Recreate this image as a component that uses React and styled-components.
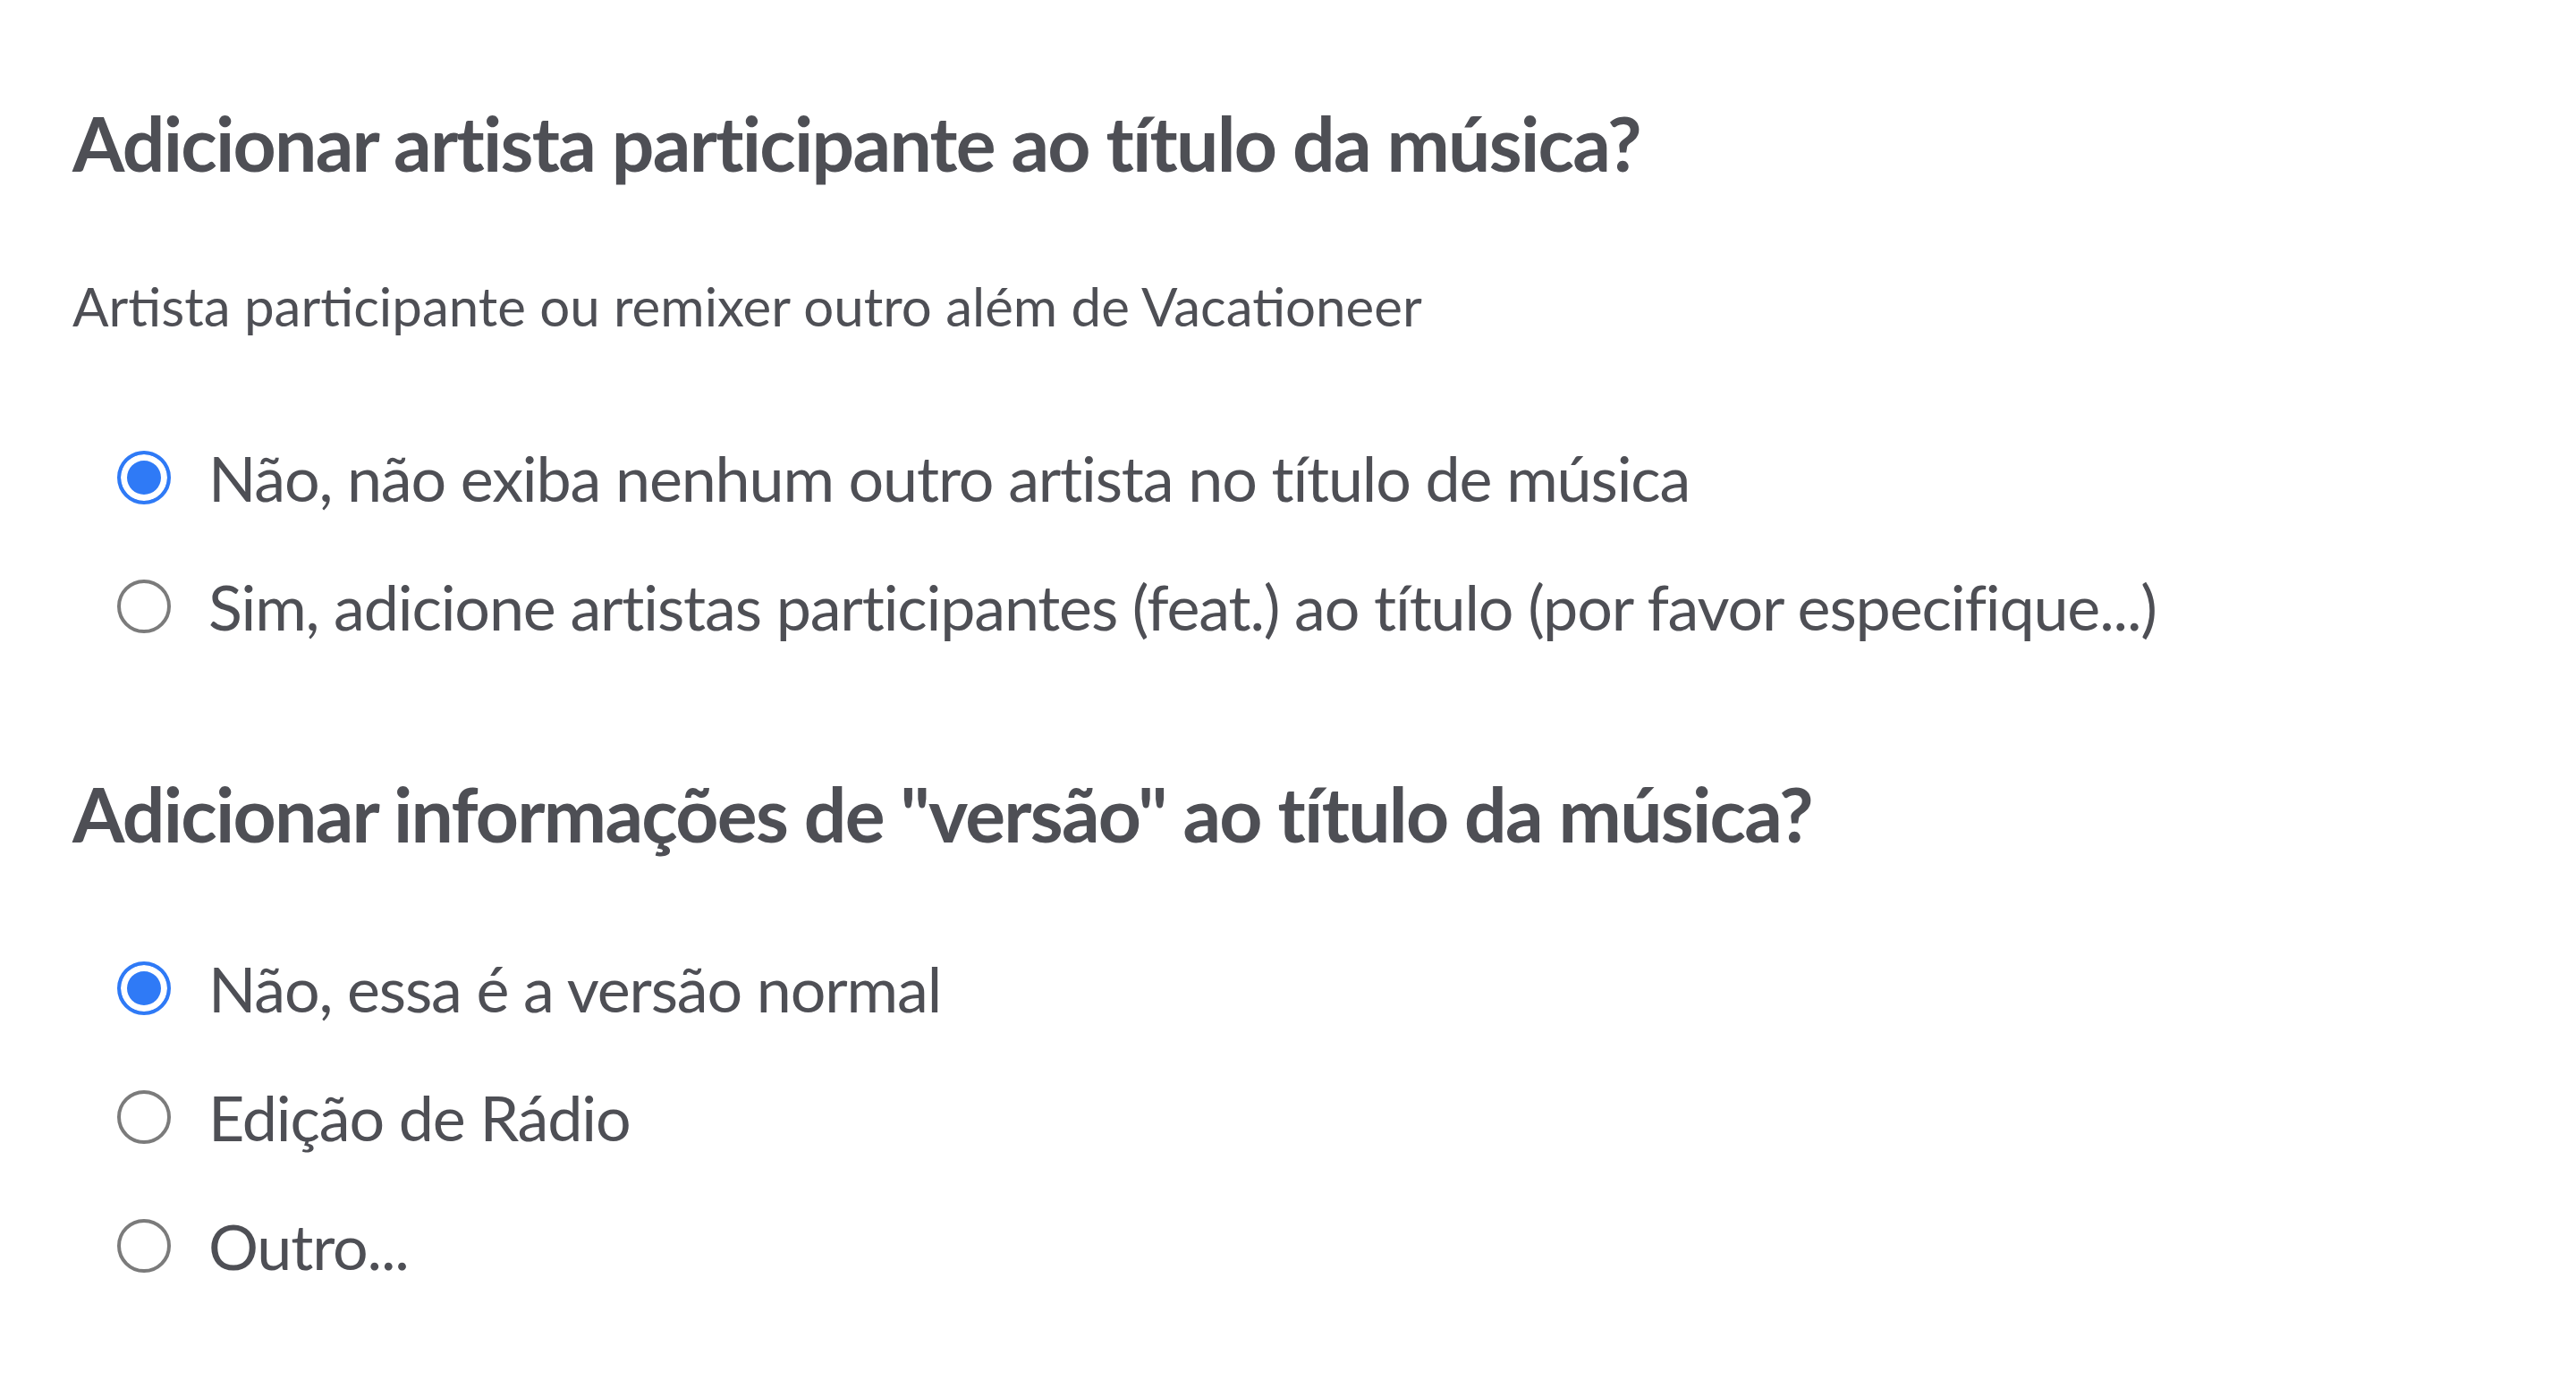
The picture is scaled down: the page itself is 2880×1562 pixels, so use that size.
import React, { useState } from "react";
import styled, { createGlobalStyle } from "styled-components";

const GlobalStyle = createGlobalStyle`
  body {
    margin: 0;
    background: #ffffff;
    font-family: Lato, "Open Sans", sans-serif;
    color: #4e4f55;
  }
`;

const Page = styled.div`
  padding: 110px 81px 120px;
`;

const Section = styled.section`
  display: flex;
  flex-direction: column;
  margin-bottom: ${(p) => p.$spaceAfter || 0}px;
`;

const Title = styled.h2`
  margin: 0;
  font-size: 84px;
  font-weight: 700;
  line-height: 1.2;
  letter-spacing: -1.75px;
`;

const Hint = styled.p`
  margin: 95px 0 0;
  font-size: 60px;
  font-weight: 400;
  line-height: 1.2;
`;

const Options = styled.div`
  display: flex;
  flex-direction: column;
  gap: 60px;
  margin-top: ${(p) => p.$top}px;
  padding-left: 50px;
`;

const Option = styled.label`
  display: flex;
  align-items: center;
  gap: 42px;
  font-size: 70px;
  line-height: 84px;
  letter-spacing: -1.15px;
  cursor: pointer;

  input {
    display: none;
  }
`;

const Circle = styled.span`
  flex: 0 0 auto;
  box-sizing: border-box;
  width: 60px;
  height: 60px;
  border-radius: 50%;
  border: 4px solid ${(p) => (p.$checked ? "#2f7af6" : "#7b7b7b")};
  background: ${(p) => (p.$checked ? "#2f7af6" : "#ffffff")};
  box-shadow: ${(p) => (p.$checked ? "inset 0 0 0 7px #ffffff" : "none")};
`;

const RadioGroup = ({ name, options, top }) => {
  const [value, setValue] = useState(options[0]);
  return (
    <Options $top={top}>
      {options.map((opt) => (
        <Option key={opt}>
          <input
            type="radio"
            name={name}
            checked={value === opt}
            onChange={() => setValue(opt)}
          />
          <Circle $checked={value === opt} />
          {opt}
        </Option>
      ))}
    </Options>
  );
};

const App = () => (
  <>
    <GlobalStyle />
    <Page>
      <Section $spaceAfter={140}>
        <Title>Adicionar artista participante ao título da música?</Title>
        <Hint>Artista participante ou remixer outro além de Vacationeer</Hint>
        <RadioGroup
          name="featured"
          top={114}
          options={[
            "Não, não exiba nenhum outro artista no título de música",
            "Sim, adicione artistas participantes (feat.) ao título (por favor especifique...)",
          ]}
        />
      </Section>
      <Section>
        <Title>Adicionar informações de "versão" ao título da música?</Title>
        <RadioGroup
          name="version"
          top={102}
          options={["Não, essa é a versão normal", "Edição de Rádio", "Outro..."]}
        />
      </Section>
    </Page>
  </>
);

export default App;
